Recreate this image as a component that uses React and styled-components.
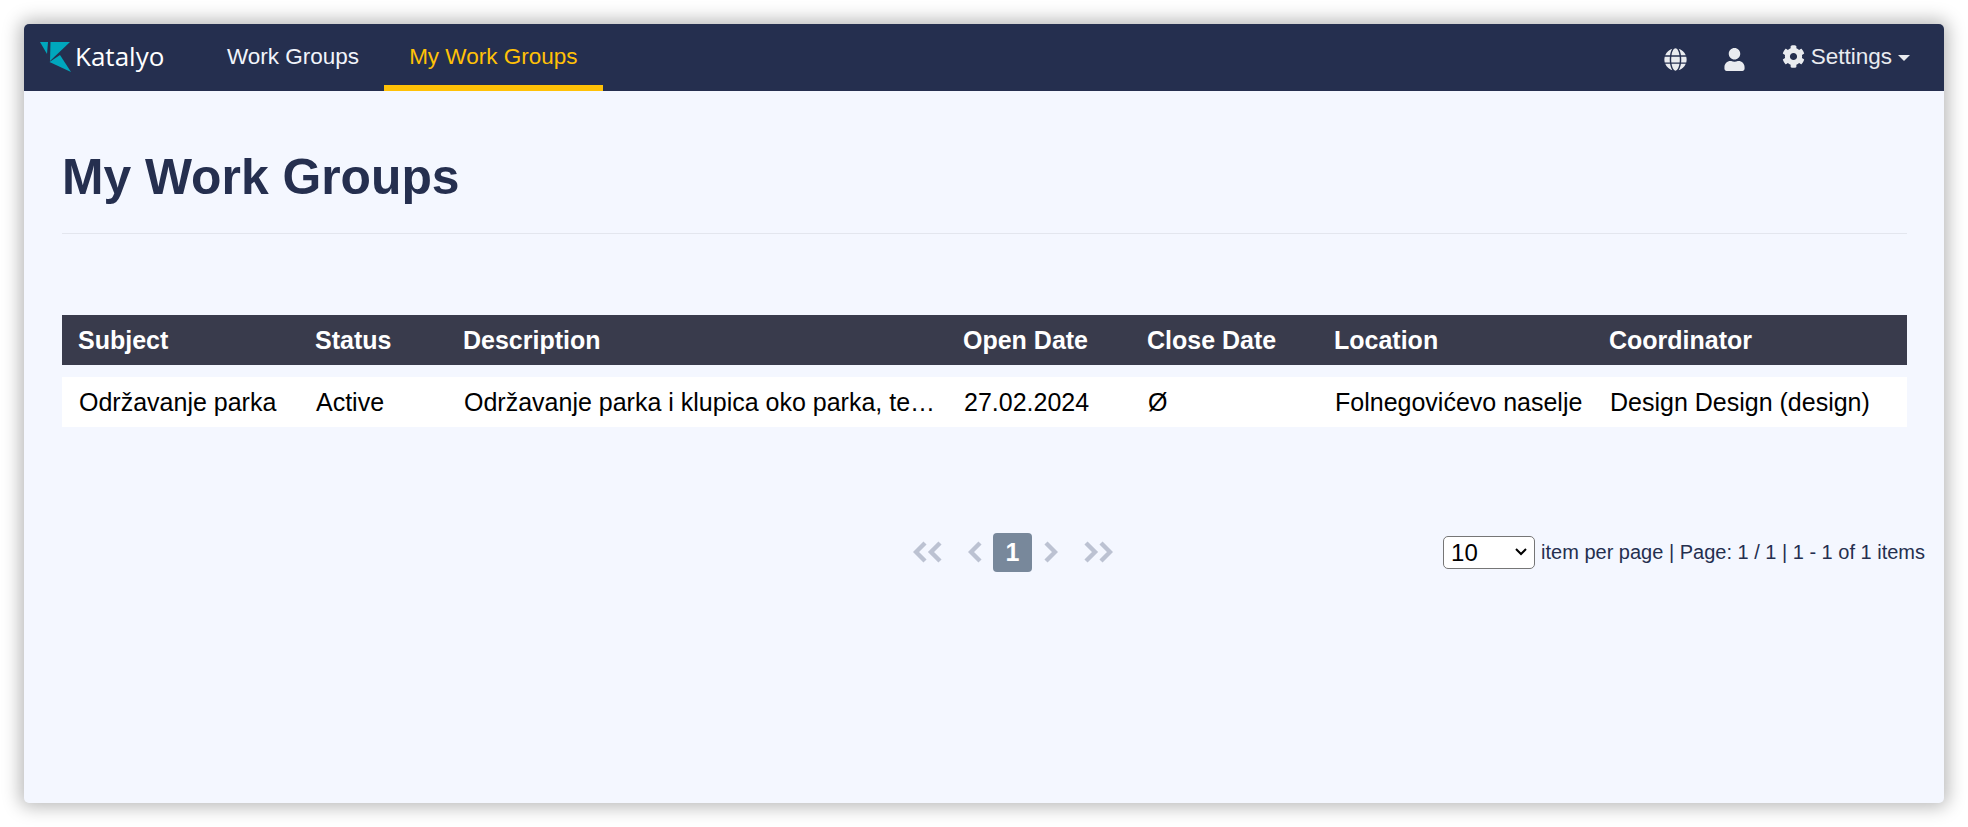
import React from "react";
import styled, { createGlobalStyle } from "styled-components";
import { FaGlobe, FaUser, FaCog } from "react-icons/fa";

const Global = createGlobalStyle`
  html, body { margin: 0; padding: 0; background: #fff; }
  body { font-family: "Liberation Sans", Arial, sans-serif; }
  * { box-sizing: border-box; }
`;
const Page = styled.div`
  width: 1968px; height: 827px; padding: 24px; overflow: hidden;
`;
const Card = styled.div`
  width: 1920px; height: 779px; background: #f4f7ff; border-radius: 5px; overflow: hidden;
  box-shadow: 0 0 18px 4px rgba(0,0,0,.28);
`;
const Nav = styled.nav`
  height: 67px; background: #252f4f; display: flex; align-items: stretch; color: #fff;
`;
const Brand = styled.div`
  display: flex; align-items: center; gap: 4px; width: 178px; padding: 0 0 0 16px;
`;
const BrandName = styled.span`
  font-family: "Open Sans", sans-serif; font-weight: 500; font-size: 26px; color: #fff; margin-bottom: 3px;
`;
const NavItem = styled.a`
  display: flex; align-items: center; height: 67px; padding: 5px 25px 0; font-size: 22.5px;
  color: ${p => (p.$active ? "#ffc107" : "#f1f4fb")};
  border-bottom: 6px solid ${p => (p.$active ? "#ffc107" : "transparent")};
`;
const NavRight = styled.div`
  margin-left: auto; display: flex; align-items: center; padding: 0 34px 1px 0; color: #e9ebef; font-size: 22.5px;
`;
const IconSlot = styled.span`
  display: flex; margin-right: ${p => p.$gap}px; margin-top: ${p => p.$top}px; font-size: ${p => p.$size}px;
`;
const Caret = styled.span`
  margin-left: 6px; margin-top: 2px; border-top: 6px solid #e9ebef; border-left: 6px solid transparent; border-right: 6px solid transparent;
`;
const Content = styled.main`
  padding: 0 37px 0 38px;
`;
const Title = styled.h1`
  margin: 0; height: 143px; padding-top: 57px; font-size: 49.8px; line-height: 58px; font-weight: 700; color: #252f4f;
  border-bottom: 1px solid #e3e6ee;
`;
const cols = "237px 148px 500px 184px 187px 275px 314px";
const HeadRow = styled.div`
  display: grid; grid-template-columns: ${cols}; width: 1845px; height: 50px; margin-top: 81px; align-items: center;
  background: #393b4c; color: #fff; font-weight: 700; font-size: 25px;
`;
const HeadCell = styled.div`
  padding-left: 16px; white-space: nowrap;
`;
const BodyRow = styled.div`
  display: grid; grid-template-columns: ${cols}; width: 1845px; height: 50px; margin-top: 12px; align-items: center;
  background: #fff; color: #000; font-size: 25px;
`;
const BodyCell = styled.div`
  padding-left: 17px; padding-right: 9px; white-space: nowrap; overflow: hidden; text-overflow: ellipsis;
`;
const Footer = styled.div`
  display: flex; align-items: center; margin-top: 105px; height: 40px; width: 1863px; padding-left: 851px;
`;
const Pager = styled.div`
  display: flex; align-items: center;
`;
const ChevronSvg = styled.svg`
  display: block; margin-right: ${p => p.$mr}px; fill: none; stroke: #bcc2d2; stroke-width: 4.4;
`;
const PageNum = styled.span`
  width: 39px; height: 39px; border-radius: 4px; background: #78889b; color: #fff; font-weight: 700; font-size: 25px;
  display: flex; align-items: center; justify-content: center; margin-right: 12px;
`;
const Meta = styled.div`
  margin-left: auto; display: flex; align-items: center; gap: 6px; color: #252f4f; font-size: 20px; white-space: nowrap;
`;
const SelectWrap = styled.div`
  position: relative; display: flex; width: 92px; height: 33px;
`;
const PerPage = styled.select`
  appearance: none; width: 100%; height: 100%; border: 1px solid #767676; border-radius: 5px; background: #fff; color: #000;
  font-family: "Liberation Sans", sans-serif; font-size: 24px; padding-left: 7px;
`;
const SelectChevron = styled.svg`
  position: absolute; right: 7px; top: 12px; pointer-events: none; fill: none; stroke: #000; stroke-width: 2;
`;

const Logo = () => (
  <svg width="31" height="32" viewBox="0 0 31 32">
    <path d="M0 0h8l-1 12z" fill="#00a7bd" />
    <path d="M10.5 0H30L10 19z" fill="#00a7bd" />
    <path d="M9.5 20l10.5-7 11 17z" fill="#00a7bd" />
  </svg>
);
const Chevron = ({ flip, double, mr }) => (
  <ChevronSvg $mr={mr} width={double ? 30 : 14} height="22" viewBox={double ? "0 0 30 22" : "0 0 14 22"}
    style={flip ? { transform: "scaleX(-1)" } : undefined}>
    <path d="M12 2 3 11l9 9" />
    {double && <path d="M27 2l-9 9 9 9" />}
  </ChevronSvg>
);

const headers = ["Subject", "Status", "Description", "Open Date", "Close Date", "Location", "Coordinator"];
const cells = ["Održavanje parka", "Active", "Održavanje parka i klupica oko parka, terena i staza u naselju", "27.02.2024", "Ø", "Folnegovićevo naselje", "Design Design (design)"];

export default function App() {
  return (
    <Page>
      <Global />
      <Card>
        <Nav>
          <Brand><Logo /><BrandName>Katalyo</BrandName></Brand>
          <NavItem>Work Groups</NavItem>
          <NavItem $active>My Work Groups</NavItem>
          <NavRight>
            <IconSlot $gap={36} $size={23} $top={4}><FaGlobe /></IconSlot>
            <IconSlot $gap={36} $size={23} $top={4}><FaUser /></IconSlot>
            <IconSlot $gap={6} $size={23} $top={-2}><FaCog /></IconSlot>
            Settings<Caret />
          </NavRight>
        </Nav>
        <Content>
          <Title>My Work Groups</Title>
          <HeadRow>{headers.map(h => <HeadCell key={h}>{h}</HeadCell>)}</HeadRow>
          <BodyRow>{cells.map(c => <BodyCell key={c}>{c}</BodyCell>)}</BodyRow>
          <Footer>
            <Pager>
              <Chevron double mr={25} />
              <Chevron mr={11} />
              <PageNum>1</PageNum>
              <Chevron flip mr={25} />
              <Chevron flip double mr={0} />
            </Pager>
            <Meta>
              <SelectWrap>
                <PerPage defaultValue="10"><option>10</option><option>25</option></PerPage>
                <SelectChevron width="14" height="9" viewBox="0 0 14 9"><path d="M2 1l5 5 5-5" /></SelectChevron>
              </SelectWrap>
              item per page | Page: 1 / 1 | 1 - 1 of 1 items
            </Meta>
          </Footer>
        </Content>
      </Card>
    </Page>
  );
}
